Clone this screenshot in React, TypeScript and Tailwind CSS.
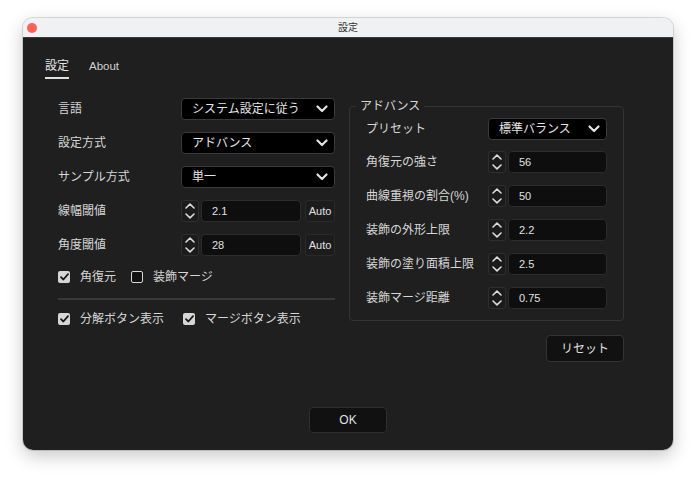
const font = "font-['Liberation_Sans','Noto_Sans_CJK_JP',sans-serif]";

function Chevron() {
  return (
    <svg width="12" height="8" viewBox="0 0 12 8" className="shrink-0">
      <path d="M1.5 1.5 L6 6 L10.5 1.5" fill="none" stroke="#e2e2e2" strokeWidth="2.2" strokeLinecap="round" strokeLinejoin="round" />
    </svg>
  );
}

function Select({ value, width }: { value: string; width: string }) {
  return (
    <div className={`flex h-[22px] ${width} items-center justify-between rounded-[4px] border border-[#3a3a3a] bg-black pl-[10px] pr-[6px] text-[12px] text-[#e4e4e4]`}>
      <span>{value}</span>
      <Chevron />
    </div>
  );
}

function Spinner() {
  return (
    <div className="flex h-[22px] w-[18px] shrink-0 flex-col items-center justify-center gap-[4px] rounded-[3px] border border-[#2e2e2e] bg-[#1b1b1b]">
      <svg width="10" height="6" viewBox="0 0 10 6">
        <path d="M1 5 L5 1.2 L9 5" fill="none" stroke="#dcdcdc" strokeWidth="1.6" strokeLinecap="round" strokeLinejoin="round" />
      </svg>
      <svg width="10" height="6" viewBox="0 0 10 6">
        <path d="M1 1 L5 4.8 L9 1" fill="none" stroke="#dcdcdc" strokeWidth="1.6" strokeLinecap="round" strokeLinejoin="round" />
      </svg>
    </div>
  );
}

function NumberField({ value, width }: { value: string; width: string }) {
  return (
    <div className="flex items-center gap-[2px]">
      <Spinner />
      <div className={`flex h-[22px] ${width} items-center rounded-[4px] border border-[#2c2c2c] bg-[#0e0e0e] pl-[10px] text-[11px] text-[#e0e0e0]`}>
        {value}
      </div>
    </div>
  );
}

function Check({ checked, label }: { checked: boolean; label: string }) {
  return (
    <div className="flex items-center gap-[10px]">
      {checked ? (
        <div className="flex h-[12px] w-[12px] items-center justify-center rounded-[2px] bg-[#d6d6d6]">
          <svg width="9" height="8" viewBox="0 0 9 8">
            <path d="M1 4.2 L3.4 6.5 L8 1.2" fill="none" stroke="#1a1a1a" strokeWidth="1.8" strokeLinecap="round" strokeLinejoin="round" />
          </svg>
        </div>
      ) : (
        <div className="h-[12px] w-[12px] rounded-[2px] border-[1.5px] border-[#d6d6d6] bg-[#111]" />
      )}
      <span className="text-[12px] text-[#d6d6d6]">{label}</span>
    </div>
  );
}

function Row({ label, children, labelWidth }: { label: string; children: React.ReactNode; labelWidth: string }) {
  return (
    <div className="flex h-[22px] items-center">
      <span className={`${labelWidth} shrink-0 text-[12px] text-[#d6d6d6]`}>{label}</span>
      {children}
    </div>
  );
}

function AutoButton() {
  return (
    <div className="ml-[4px] flex h-[22px] w-[30px] items-center justify-center rounded-[3px] border border-[#2a2a2a] bg-[#1c1c1c] text-[11px] text-[#e0e0e0]">
      Auto
    </div>
  );
}

export default function App() {
  return (
    <div className={`${font} h-[477px] w-[696px] bg-white pl-[23px] pt-[18px]`}>
      <div className="flex h-[432px] w-[650px] flex-col overflow-hidden rounded-[10px] shadow-[0_0_0_1px_rgba(0,0,0,0.12),0_6px_18px_rgba(0,0,0,0.22)]">
        {/* title bar */}
        <div className="relative flex h-[20px] shrink-0 items-center justify-center border-b border-[#3a3a3a] bg-[#f0f1f2]">
          <div className="absolute left-[4px] top-[5px] h-[10px] w-[10px] rounded-full bg-[#fe5f57]" />
          <span className="text-[10px] text-[#333]">設定</span>
        </div>

        <div className="flex flex-1 flex-col bg-[#1f1f1f]">
          {/* tabs */}
          <div className="flex gap-[20px] pl-[22px] pt-[20px]">
            <div className="flex flex-col">
              <span className="text-[12px] leading-[16px] text-[#e6e6e6]">設定</span>
              <div className="mt-[3px] h-[2px] w-[24px] bg-[#e0e0e0]" />
            </div>
            <span className="text-[11.5px] leading-[16px] text-[#d0d0d0]">About</span>
          </div>

          {/* content */}
          <div className="mt-[19px] flex pl-[35px]">
            <div className="flex w-[277px] flex-col">
              <div className="flex flex-col gap-[12px]">
                <Row label="言語" labelWidth="w-[123px]">
                  <Select value="システム設定に従う" width="w-[154px]" />
                </Row>
                <Row label="設定方式" labelWidth="w-[123px]">
                  <Select value="アドバンス" width="w-[154px]" />
                </Row>
                <Row label="サンプル方式" labelWidth="w-[123px]">
                  <Select value="単一" width="w-[154px]" />
                </Row>
                <Row label="線幅閾値" labelWidth="w-[123px]">
                  <NumberField value="2.1" width="w-[100px]" />
                  <AutoButton />
                </Row>
                <Row label="角度閾値" labelWidth="w-[123px]">
                  <NumberField value="28" width="w-[100px]" />
                  <AutoButton />
                </Row>
              </div>
              <div className="mt-[13px] flex h-[16px] items-center gap-[15px]">
                <Check checked label="角復元" />
                <Check checked={false} label="装飾マージ" />
              </div>
              <div className="mt-[13px] h-[2px] bg-[#383838]" />
              <div className="mt-[11px] flex h-[16px] items-center gap-[19px]">
                <Check checked label="分解ボタン表示" />
                <Check checked label="マージボタン表示" />
              </div>
            </div>

            <div className="ml-[14px] flex w-[275px] flex-col items-end">
              <fieldset className="w-full rounded-[4px] border border-[#343434] pb-[11px] pl-[16px] pr-[16px]">
                <legend className="-ml-[10px] px-[4px] text-[12px] leading-[16px] text-[#d6d6d6]">アドバンス</legend>
                <div className="mt-[4px] flex flex-col gap-[11px]">
                  <Row label="プリセット" labelWidth="w-[122px]">
                    <Select value="標準バランス" width="w-[119px]" />
                  </Row>
                  <div className="flex flex-col gap-[12px]">
                    <Row label="角復元の強さ" labelWidth="w-[122px]">
                      <NumberField value="56" width="w-[99px]" />
                    </Row>
                    <Row label="曲線重視の割合(%)" labelWidth="w-[122px]">
                      <NumberField value="50" width="w-[99px]" />
                    </Row>
                    <Row label="装飾の外形上限" labelWidth="w-[122px]">
                      <NumberField value="2.2" width="w-[99px]" />
                    </Row>
                    <Row label="装飾の塗り面積上限" labelWidth="w-[122px]">
                      <NumberField value="2.5" width="w-[99px]" />
                    </Row>
                    <Row label="装飾マージ距離" labelWidth="w-[122px]">
                      <NumberField value="0.75" width="w-[99px]" />
                    </Row>
                  </div>
                </div>
              </fieldset>
              <div className="mt-[14px] flex h-[27px] w-[78px] items-center justify-center rounded-[4px] border border-[#333] bg-[#111] text-[12px] text-[#e0e0e0]">
                リセット
              </div>
            </div>
          </div>

          <div className="flex-1" />
          <div className="mb-[17px] flex justify-center">
            <div className="flex h-[26px] w-[78px] items-center justify-center rounded-[4px] border border-[#2e2e2e] bg-[#111] text-[12px] text-[#e0e0e0]">
              OK
            </div>
          </div>
        </div>
      </div>
    </div>
  );
}
